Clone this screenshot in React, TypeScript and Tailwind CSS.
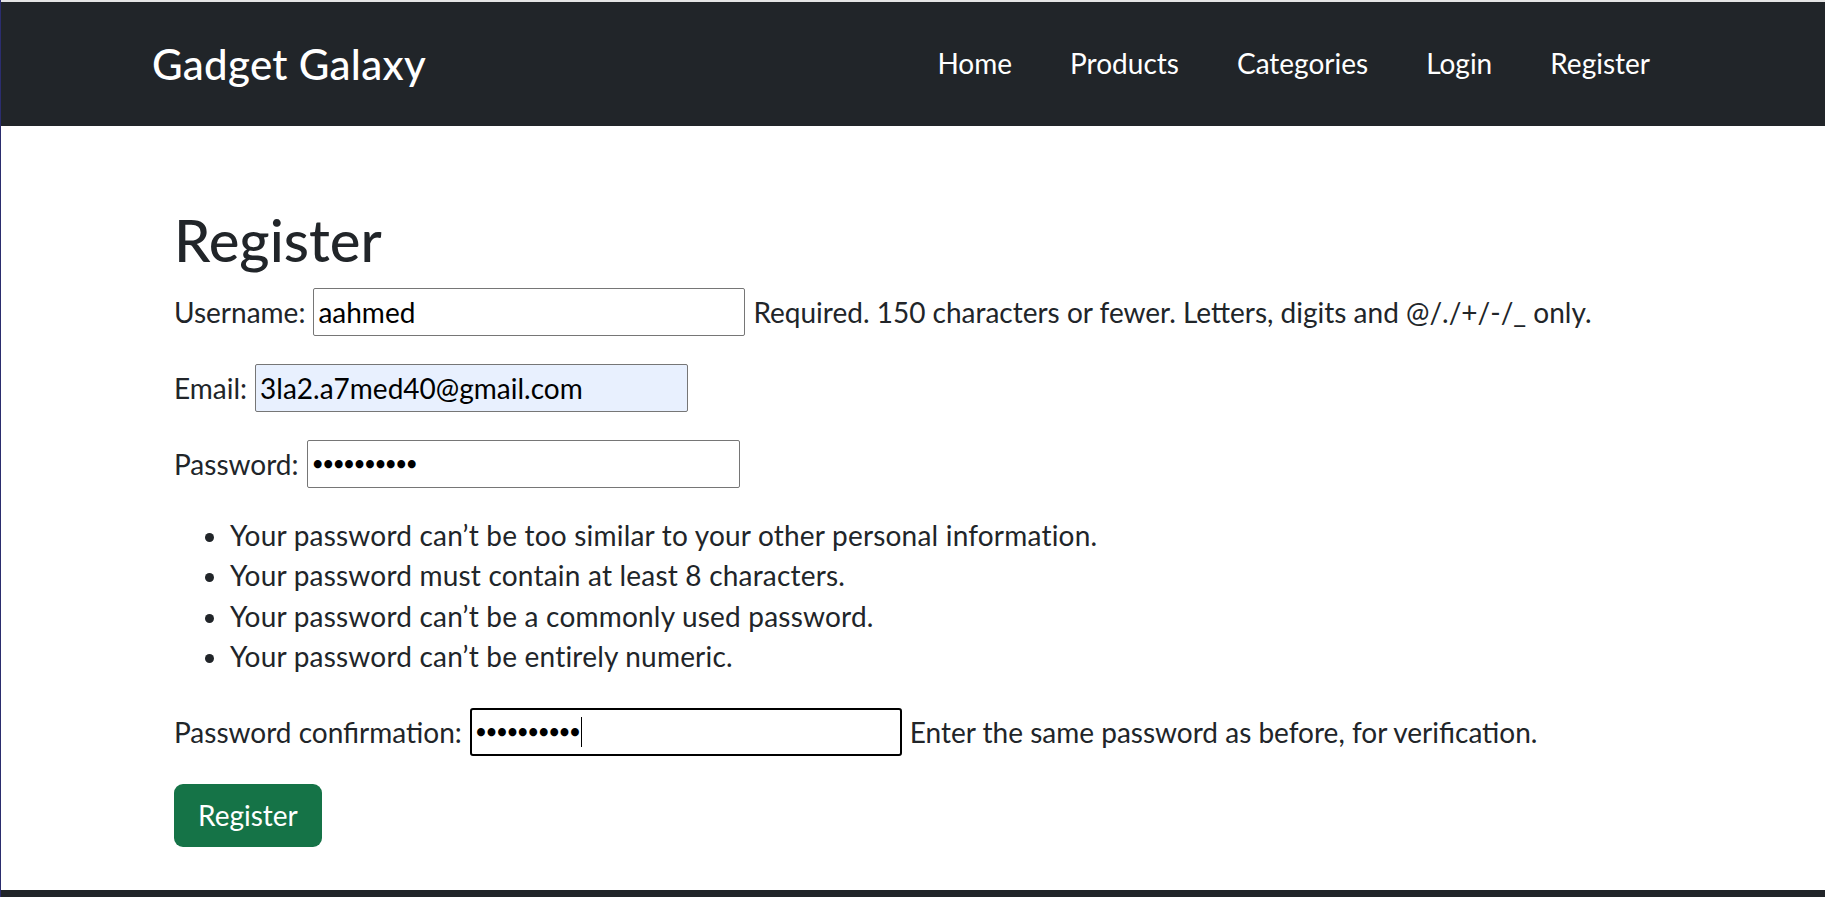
import React from "react";

const dots = "••••••••••";

function Field({
  label,
  children,
  help,
  className = "",
}: {
  label: string;
  children: React.ReactNode;
  help?: string;
  className?: string;
}) {
  return (
    <div className={`flex items-center h-[48px] gap-2 ${className}`}>
      <span className="leading-[42px]">{label}</span>
      {children}
      {help && <span className="leading-[42px]">{help}</span>}
    </div>
  );
}

export default function App() {
  return (
    <div className="min-h-[897px] bg-white font-['Lato',sans-serif] text-[28px] text-[#212529] border-l border-[#2b2d6e] overflow-hidden">
      <div className="h-[2px] bg-[#e5e5e5]" />
      <nav className="h-[124px] bg-[#212529] flex items-center justify-between pl-[151px] pr-[175px]">
        <span className="text-white text-[42px] leading-[1.2] font-medium tracking-[0.3px]">Gadget Galaxy</span>
        <ul className="flex items-center gap-[58px] text-white text-[28px] leading-[1.2]">
          <li>Home</li>
          <li>Products</li>
          <li>Categories</li>
          <li>Login</li>
          <li>Register</li>
        </ul>
      </nav>

      <main className="pl-[173px] pt-[79px]">
        <h1 className="text-[58px] leading-[1.2] font-medium mb-[13px]">Register</h1>

        <Field
          label="Username:"
          help="Required. 150 characters or fewer. Letters, digits and @/./+/-/_ only."
          className="mb-[28px]"
        >
          <div className="w-[432px] h-[48px] border border-[#767676] rounded-[2px] px-[4px] flex items-center text-black">
            aahmed
          </div>
        </Field>

        <Field label="Email:" className="mb-[28px]">
          <div className="w-[433px] h-[48px] border border-[#767676] rounded-[2px] px-[4px] flex items-center text-black bg-[#e8f0fe]">
            3la2.a7med40@gmail.com
          </div>
        </Field>

        <Field label="Password:" className="mb-[27px]">
          <div className="w-[433px] h-[48px] border border-[#767676] rounded-[2px] px-[5px] flex items-center text-black">
            <span className="text-[18px] font-bold">{dots}</span>
          </div>
        </Field>

        <ul className="list-disc pl-[56px] leading-[40.5px] mb-[31px] tracking-[0.2px]">
          <li>Your password can’t be too similar to your other personal information.</li>
          <li>Your password must contain at least 8 characters.</li>
          <li>Your password can’t be a commonly used password.</li>
          <li>Your password can’t be entirely numeric.</li>
        </ul>

        <Field
          label="Password confirmation:"
          help="Enter the same password as before, for verification."
          className="mb-[28px]"
        >
          <div className="w-[432px] h-[48px] border-2 border-black rounded-[3px] px-[4px] flex items-center text-black">
            <span className="text-[18px] font-bold">{dots}</span>
            <span className="inline-block w-px h-[30px] bg-black ml-[1px]" />
          </div>
        </Field>

        <button className="h-[63px] px-[24px] rounded-[9px] bg-[#157347] text-white text-[28px] leading-none">
          Register
        </button>
      </main>

      <footer className="mt-[43px] h-[60px] bg-[#212529]" />
    </div>
  );
}
